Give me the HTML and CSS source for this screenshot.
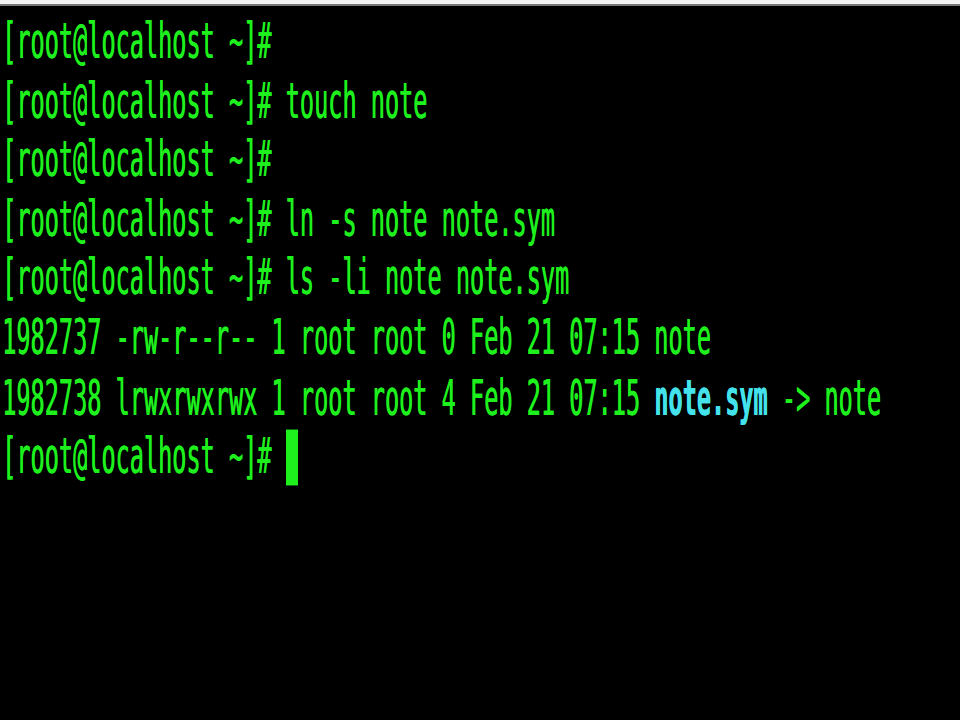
FILE: index.html
```html
<!DOCTYPE html>
<html>
<head>
<meta charset="utf-8">
<link rel="stylesheet" href="styles.css">
</head>
<body>
<div class="topbar"></div>
<div class="term">
  <div class="screen">
    <div class="line">[root@localhost ~]#</div>
    <div class="line">[root@localhost ~]# touch note</div>
    <div class="line">[root@localhost ~]#</div>
    <div class="line">[root@localhost ~]# ln -s note note.sym</div>
    <div class="line">[root@localhost ~]# ls -li note note.sym</div>
    <div class="line">1982737 -rw-r--r-- 1 root root 0 Feb 21 07:15 note</div>
    <div class="line">1982738 lrwxrwxrwx 1 root root 4 Feb 21 07:15 <span class="link">note.sym</span> -&gt; note</div>
    <div class="line">[root@localhost ~]# <span class="cursor"></span></div>
  </div>
</div>
</body>
</html>
```
FILE: styles.css
```css
html, body {
  margin: 0;
  padding: 0;
  background: #000;
  overflow: hidden;
  width: 960px;
  height: 720px;
}
.topbar {
  height: 4px;
  background: #f4f4f4;
  border-bottom: 2px solid #777;
}
.term {
  height: 714px;
  background: #000;
  overflow: hidden;
}
.screen {
  padding: 3px 0 0 2px;
  transform: scaleY(2.15);
  transform-origin: 0 0;
  font-family: "DejaVu Sans Mono", monospace;
  font-size: 23.55px;
  line-height: 27.6px;
  color: #1ef01e;
  text-shadow: 0.4px 0 0 currentColor;
}
.line {
  white-space: pre;
  height: 27.6px;
}
.link {
  color: #44e2ea;
  font-weight: bold;
}
.cursor {
  display: inline-block;
  width: 12px;
  height: 26.5px;
  background: #1ef01e;
  vertical-align: top;
  margin-top: 0.5px;
}
```
